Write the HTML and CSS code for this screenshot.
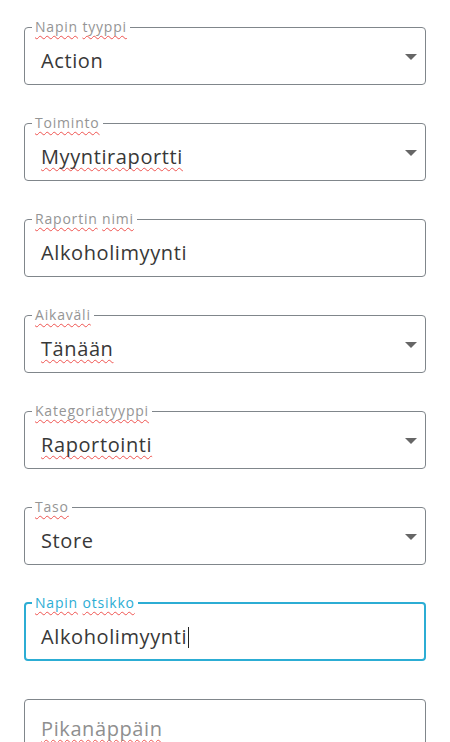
FILE: index.html
```html
<!DOCTYPE html>
<html lang="fi">
<head>
<meta charset="utf-8">
<link rel="stylesheet" href="styles.css">
</head>
<body>
<form class="form">
  <fieldset class="field">
    <legend class="field-label"><span class="sp">Napin</span> <span class="sp">tyyppi</span></legend>
    <div class="field-value">Action</div>
    <svg class="arrow" width="12" height="6" viewBox="0 0 12 6"><path d="M0 0h12L6 6z" fill="#666"/></svg>
  </fieldset>
  <fieldset class="field">
    <legend class="field-label"><span class="sp">Toiminto</span></legend>
    <div class="field-value"><span class="sp">Myyntiraportti</span></div>
    <svg class="arrow" width="12" height="6" viewBox="0 0 12 6"><path d="M0 0h12L6 6z" fill="#666"/></svg>
  </fieldset>
  <fieldset class="field">
    <legend class="field-label"><span class="sp">Raportin</span> <span class="sp">nimi</span></legend>
    <div class="field-value">Alkoholimyynti</div>
  </fieldset>
  <fieldset class="field">
    <legend class="field-label"><span class="sp">Aikaväli</span></legend>
    <div class="field-value"><span class="sp">Tänään</span></div>
    <svg class="arrow" width="12" height="6" viewBox="0 0 12 6"><path d="M0 0h12L6 6z" fill="#666"/></svg>
  </fieldset>
  <fieldset class="field">
    <legend class="field-label"><span class="sp">Kategoriatyyppi</span></legend>
    <div class="field-value"><span class="sp">Raportointi</span></div>
    <svg class="arrow" width="12" height="6" viewBox="0 0 12 6"><path d="M0 0h12L6 6z" fill="#666"/></svg>
  </fieldset>
  <fieldset class="field">
    <legend class="field-label"><span class="sp">Taso</span></legend>
    <div class="field-value">Store</div>
    <svg class="arrow" width="12" height="6" viewBox="0 0 12 6"><path d="M0 0h12L6 6z" fill="#666"/></svg>
  </fieldset>
  <fieldset class="field field-focused">
    <legend class="field-label"><span class="sp">Napin</span> <span class="sp">otsikko</span></legend>
    <div class="field-value">Alkoholimyynti<span class="caret"></span></div>
  </fieldset>
  <fieldset class="field field-empty">
    <div class="field-value field-placeholder"><span class="sp">Pikanäppäin</span></div>
  </fieldset>
</form>
</body>
</html>
```
FILE: styles.css
```css
html, body {
  margin: 0;
  padding: 0;
  background: #fff;
}
body {
  font-family: "Open Sans", "Liberation Sans", sans-serif;
  color: #333;
}
.form {
  display: flex;
  flex-direction: column;
  gap: 30px;
  padding: 19px 24px 0;
}
.field {
  position: relative;
  margin: 0;
  padding: 0 16px;
  height: 66px;
  box-sizing: border-box;
  border: 1px solid #80868b;
  border-radius: 4px;
  min-width: 0;
}
.field-label {
  margin-left: -9px;
  padding: 0 3px;
  font-size: 14px;
  line-height: 16px;
  color: #959595;
  letter-spacing: 0.8px;
}
.field-value {
  font-size: 20px;
  line-height: 26px;
  padding-top: 13px;
  letter-spacing: 0.6px;
  color: #383838;
  display: flex;
  align-items: center;
}
.sp {
  text-decoration: underline wavy #ef5350;
  text-decoration-thickness: 1px;
  text-underline-offset: 3px;
  text-decoration-skip-ink: none;
}
.arrow {
  position: absolute;
  right: 8px;
  top: 19px;
}
.field-focused {
  border: 2px solid #2cadd4;
}
.field-focused .field-label {
  color: #2cadd4;
  margin-left: -10px;
}
.field-focused .field-value {
  margin-left: -1px;
}
.caret {
  display: inline-block;
  width: 1px;
  height: 21px;
  background: #222;
  margin-left: 1px;
}
.field-empty {
  margin-top: 8px;
  height: 58px;
}
.field-placeholder {
  color: #8f8f8f;
  padding-top: 16px;
}
```
